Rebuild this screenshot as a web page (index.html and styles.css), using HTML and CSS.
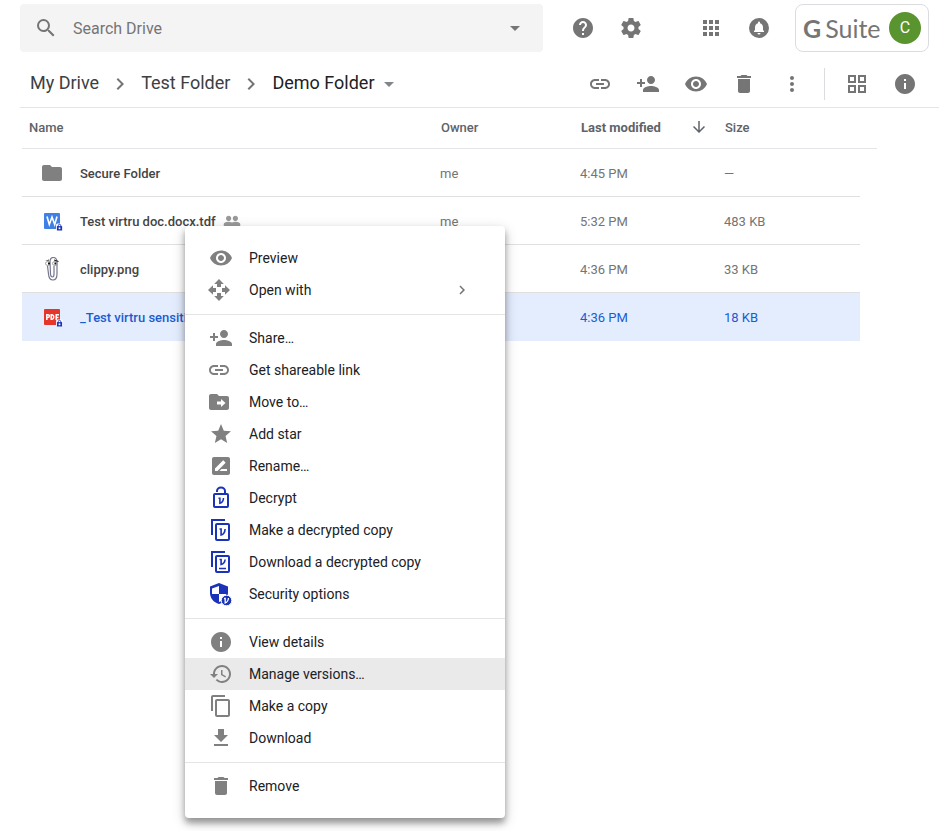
FILE: index.html
```
<!DOCTYPE html>
<html lang="en">
  <head>
    <meta charset="UTF-8" />
    <meta name="viewport" content="width=device-width, initial-scale=1.0" />
    <title>Demo Folder - Drive</title>
    <link rel="stylesheet" href="styles.css">
  </head>
  <body>
    <!-- icons used more than once -->
    <svg class="sprite" aria-hidden="true">
      <symbol id="eye" viewBox="0 0 24 24"><path d="M12 4.500C7 4.500 2.730 7.610 1 12c1.730 4.390 6 7.500 11 7.500s9.270-3.110 11-7.500c-1.730-4.390-6-7.500-11-7.500zM12 17c-2.760 0-5-2.240-5-5s2.240-5 5-5 5 2.240 5 5-2.240 5-5 5zm0-8c-1.660 0-3 1.340-3 3s1.340 3 3 3 3-1.340 3-3-1.340-3-3-3z"/></symbol>
      <symbol id="person-add" viewBox="0 0 24 24"><path d="M15 12c2.210 0 4-1.790 4-4s-1.790-4-4-4-4 1.790-4 4 1.790 4 4 4zm-9-2V7H4v3H1v2h3v3h2v-3h3v-2H6zm9 4c-2.670 0-8 1.340-8 4v2h16v-2c0-2.660-5.330-4-8-4z"/></symbol>
      <symbol id="link" viewBox="0 0 24 24"><path d="M3.900 12c0-1.710 1.390-3.100 3.100-3.100h4V7H7c-2.760 0-5 2.240-5 5s2.240 5 5 5h4v-1.900H7c-1.710 0-3.100-1.390-3.100-3.100zM8 13h8v-2H8v2zm9-6h-4v1.900h4c1.710 0 3.100 1.390 3.100 3.100s-1.390 3.100-3.100 3.100h-4V17h4c2.760 0 5-2.240 5-5s-2.240-5-5-5z"/></symbol>
      <symbol id="trash" viewBox="0 0 24 24"><path d="M6 19c0 1.100.9 2 2 2h8c1.100 0 2-.9 2-2V7H6v12zM19 4h-3.500l-1-1h-5l-1 1H5v2h14V4z"/></symbol>
      <symbol id="info" viewBox="0 0 24 24"><path d="M12 2C6.480 2 2 6.480 2 12s4.480 10 10 10 10-4.480 10-10S17.520 2 12 2zm1 15h-2v-6h2v6zm0-8h-2V7h2v2z"/></symbol>
      <symbol id="chevron" viewBox="0 0 24 24"><path d="M10 6L8.590 7.410 13.170 12l-4.580 4.590L10 18l6-6z"/></symbol>
      <symbol id="drop" viewBox="0 0 24 24"><path d="M7 10l5 5 5-5z"/></symbol>
      <symbol id="lock-badge" viewBox="0 0 8 8"><rect width="8" height="8" rx="2" fill="#fff"/><path fill="none" stroke="#1a33b8" d="M2.500 4V2.500a1.500 1.500 0 0 1 3 0V4"/><path fill="#1a33b8" d="M1 3h6v5H1z"/><path fill="#fff" d="M3 4.500h2v2H3z"/></symbol>
    </svg>

    <header class="topbar">
      <form class="search">
        <svg class="icon" viewBox="0 0 24 24"><path d="M15.500 14h-.79l-.28-.27A6.471 6.471 0 0 0 16 9.500 6.500 6.500 0 1 0 9.500 16c1.610 0 3.090-.59 4.230-1.570l.27.28v.79l5 4.990L20.490 19l-4.990-5zm-6 0C7.010 14 5 11.990 5 9.500S7.010 5 9.500 5 14 7.010 14 9.500 11.990 14 9.500 14z"/></svg>
        <input type="text" placeholder="Search Drive" aria-label="Search Drive">
        <button type="button" class="icon-btn" aria-label="Search options"><svg class="icon"><use href="#drop"/></svg></button>
      </form>
      <div class="top-actions">
        <button class="icon-btn" aria-label="Help"><svg class="icon" viewBox="0 0 24 24"><path d="M12 2C6.480 2 2 6.480 2 12s4.480 10 10 10 10-4.480 10-10S17.520 2 12 2zm1 17h-2v-2h2v2zm2.070-7.750l-.9.920C13.450 12.900 13 13.500 13 15h-2v-.5c0-1.100.45-2.100 1.170-2.830l1.240-1.260c.37-.36.59-.86.59-1.410 0-1.100-.9-2-2-2s-2 .9-2 2H8c0-2.210 1.790-4 4-4s4 1.790 4 4c0 .88-.36 1.680-.93 2.250z"/></svg></button>
        <button class="icon-btn" aria-label="Settings"><svg class="icon" viewBox="0 0 24 24"><path d="M19.430 12.980c.04-.32.07-.64.07-.98s-.03-.66-.07-.98l2.110-1.650c.19-.15.24-.42.12-.64l-2-3.460c-.12-.22-.39-.3-.61-.22l-2.490 1c-.52-.4-1.080-.73-1.690-.98l-.38-2.650C14.460 2.180 14.250 2 14 2h-4c-.25 0-.46.18-.49.42l-.38 2.650c-.61.25-1.170.59-1.690.98l-2.490-1c-.23-.09-.49 0-.61.22l-2 3.460c-.13.22-.07.49.12.64l2.110 1.650c-.04.32-.07.65-.07.98s.03.66.07.98l-2.110 1.650c-.19.15-.24.42-.12.64l2 3.460c.12.22.39.3.61.22l2.490-1c.52.4 1.080.73 1.690.98l.38 2.650c.03.24.24.42.49.42h4c.25 0 .46-.18.49-.42l.38-2.650c.61-.25 1.170-.59 1.690-.98l2.490 1c.23.09.49 0 .61-.22l2-3.460c.12-.22.07-.49-.12-.64l-2.110-1.650zM12 15.500c-1.930 0-3.500-1.570-3.500-3.500s1.570-3.500 3.500-3.500 3.500 1.570 3.500 3.500-1.570 3.500-3.500 3.500z"/></svg></button>
        <button class="icon-btn apps" aria-label="Apps"><svg class="icon" viewBox="0 0 24 24"><path d="M4 8h4V4H4v4zm6 12h4v-4h-4v4zm-6 0h4v-4H4v4zm0-6h4v-4H4v4zm6 0h4v-4h-4v4zm6-10v4h4V4h-4zm-6 4h4V4h-4v4zm6 6h4v-4h-4v4zm0 6h4v-4h-4v4z"/></svg></button>
        <button class="icon-btn" aria-label="Notifications"><svg class="icon" viewBox="0 0 24 24"><path d="M12 2a10 10 0 1 0 0 20 10 10 0 0 0 0-20zm0 16.500a1.500 1.500 0 0 1-1.500-1.500h3a1.500 1.500 0 0 1-1.500 1.500zm5-2.500H7v-1l1-1v-2.600c0-2.100 1.100-3.800 3-4.200v-.7a1 1 0 0 1 2 0v.7c1.900.4 3 2.100 3 4.200V14l1 1v1z"/></svg></button>
        <a class="account" href="#">
          <span class="suite"><b>G</b><span>Suite</span></span>
          <span class="avatar">C</span>
        </a>
      </div>
    </header>

    <div class="toolbar">
      <nav class="crumbs">
        <a href="#">My Drive</a>
        <svg class="icon"><use href="#chevron"/></svg>
        <a href="#">Test Folder</a>
        <svg class="icon"><use href="#chevron"/></svg>
        <a href="#" class="current">Demo Folder</a>
        <svg class="icon arrow"><use href="#drop"/></svg>
      </nav>
      <div class="tools">
        <button class="icon-btn" aria-label="Get link"><svg class="icon"><use href="#link"/></svg></button>
        <button class="icon-btn" aria-label="Share"><svg class="icon"><use href="#person-add"/></svg></button>
        <button class="icon-btn" aria-label="Preview"><svg class="icon"><use href="#eye"/></svg></button>
        <button class="icon-btn" aria-label="Remove"><svg class="icon"><use href="#trash"/></svg></button>
        <button class="icon-btn" aria-label="More actions"><svg class="icon" viewBox="0 0 24 24"><path d="M12 8c1.100 0 2-.9 2-2s-.9-2-2-2-2 .9-2 2 .9 2 2 2zm0 2c-1.100 0-2 .9-2 2s.9 2 2 2 2-.9 2-2-.9-2-2-2zm0 6c-1.100 0-2 .9-2 2s.9 2 2 2 2-.9 2-2-.9-2-2-2z"/></svg></button>
      </div>
      <div class="view-tools">
        <button class="icon-btn" aria-label="Grid view"><svg class="icon" viewBox="0 0 24 24"><path fill-rule="evenodd" d="M3 3h8v8H3zm2 2v4h4V5zm8-2h8v8h-8zm2 2v4h4V5zM3 13h8v8H3zm2 2v4h4v-4zm8-2h8v8h-8zm2 2v4h4v-4z"/></svg></button>
        <button class="icon-btn" aria-label="View details"><svg class="icon"><use href="#info"/></svg></button>
      </div>
    </div>

    <main>
      <table class="files">
        <thead>
          <tr>
            <th class="name">Name</th>
            <th class="owner">Owner</th>
            <th class="modified"><div class="sort">Last modified <svg viewBox="0 0 24 24"><path d="M20 12l-1.410-1.410L13 16.170V4h-2v12.170l-5.580-5.590L4 12l8 8 8-8z"/></svg></div></th>
            <th class="size">Size</th>
            <th class="gutter"></th>
          </tr>
        </thead>
        <tbody>
          <tr>
            <td>
              <div class="file">
                <svg class="icon" viewBox="0 0 24 24"><path d="M10 4H4c-1.100 0-1.990.9-1.990 2L2 18c0 1.100.9 2 2 2h16c1.100 0 2-.9 2-2V8c0-1.100-.9-2-2-2h-8l-2-2z"/></svg>
                <span>Secure Folder</span>
              </div>
            </td>
            <td>me</td>
            <td>4:45 PM</td>
            <td>—</td>
          </tr>
          <tr>
            <td>
              <div class="file">
                <svg class="icon" viewBox="0 0 24 24"><rect x="4" y="4" width="16" height="16" rx="1" fill="#4080e4"/><path fill="none" stroke="#fff" stroke-width="1.600" d="M7 7.500l2.300 8L12 8l2.700 7.500L17 7.500"/><use href="#lock-badge" x="16" y="14" width="7" height="8"/></svg>
                <span>Test virtru doc.docx.tdf</span>
                <svg class="shared" viewBox="0 0 24 24"><path d="M16.500 13c-1.200 0-3.070.34-4.500 1-1.430-.67-3.300-1-4.500-1C5.330 13 1 14.080 1 16.250V19h22v-2.750c0-2.170-4.330-3.250-6.500-3.250zM7.500 12C9.430 12 11 10.430 11 8.500S9.430 5 7.500 5 4 6.570 4 8.500 5.570 12 7.500 12zm9 0c1.930 0 3.500-1.570 3.500-3.500S18.430 5 16.500 5 13 6.570 13 8.500s1.570 3.500 3.500 3.500z"/></svg>
              </div>
            </td>
            <td>me</td>
            <td>5:32 PM</td>
            <td>483 KB</td>
          </tr>
          <tr>
            <td>
              <div class="file">
                <svg class="icon" viewBox="0 0 24 24"><g fill="none" stroke="#74768c" stroke-width="1.200"><path d="M7.500 9l1 8c.5 8 8.500 8 8.500 0V5c0-6-7-6-7 0l.5 12c.3 4 3.500 4 3.500 0V9"/></g><ellipse cx="8" cy="6.500" rx="2.500" ry="2" fill="#fff" stroke="#8a8a8a" stroke-width=".8"/><ellipse cx="15" cy="6.500" rx="2.500" ry="2" fill="#fff" stroke="#8a8a8a" stroke-width=".8"/><path fill="#111" d="M8 5.500h2v2H8zm6.500 0h2v2h-2zM5 4l4-1.500v1zm9-1.500L18.500 4v1L14 3.500z"/></svg>
                <span>clippy.png</span>
              </div>
            </td>
            <td>me</td>
            <td>4:36 PM</td>
            <td>33 KB</td>
          </tr>
          <tr class="selected">
            <td>
              <div class="file">
                <svg class="icon" viewBox="0 0 24 24"><rect x="4" y="4" width="16" height="16" rx="1" fill="#e6352b"/><g fill="none" stroke="#fff" stroke-width="1.500"><path d="M6.800 15V9.700h1.200a1.300 1.300 0 0 1 0 2.800H6.800M11.200 9.700v4.600h.5a1.900 1.900 0 0 0 1.900-2.300 1.900 1.900 0 0 0-1.900-2.300zM16.200 15V9.700h2.800M16.200 12.400h2.300"/></g><use href="#lock-badge" x="16" y="14" width="7" height="8"/></svg>
                <span>_Test virtru sensitive.pdf.tdf</span>
              </div>
            </td>
            <td>me</td>
            <td>4:36 PM</td>
            <td>18 KB</td>
          </tr>
        </tbody>
      </table>
    </main>

    <div class="menu" role="menu">
      <button role="menuitem"><svg class="icon"><use href="#eye"/></svg>Preview</button>
      <button role="menuitem"><svg class="icon wide" viewBox="0 0 24 24"><path d="M12 1l4.800 5H14v3h-4V6H7.200zM12 23l-4.800-5H10v-3h4v3h2.800zM1 12l5-4.800V10h3v4H6v2.800zM23 12l-5 4.800V14h-3v-4h3V7.200z"/></svg>Open with<svg class="more"><use href="#chevron"/></svg></button>
      <hr>
      <button role="menuitem"><svg class="icon"><use href="#person-add"/></svg>Share…</button>
      <button role="menuitem"><svg class="icon wide"><use href="#link"/></svg>Get shareable link</button>
      <button role="menuitem"><svg class="icon wide" viewBox="0 0 24 24"><path d="M20 6h-8l-2-2H4c-1.100 0-2 .9-2 2v12c0 1.100.9 2 2 2h16c1.100 0 2-.9 2-2V8c0-1.100-.9-2-2-2zm-6 11v-2.500h-4v-3h4V9l4.500 4-4.500 4z"/></svg>Move to…</button>
      <button role="menuitem"><svg class="icon" viewBox="0 0 24 24"><path d="M12 17.270L18.180 21l-1.640-7.030L22 9.240l-7.190-.61L12 2 9.190 8.630 2 9.240l5.460 4.730L5.820 21z"/></svg>Add star</button>
      <button role="menuitem"><svg class="icon" viewBox="0 0 24 24"><path d="M19 3H5c-1.100 0-2 .9-2 2v14c0 1.100.9 2 2 2h14c1.100 0 2-.9 2-2V5c0-1.100-.9-2-2-2zM6 17v-2.500l7.900-7.900c.2-.2.500-.2.700 0l1.800 1.800c.2.200.2.500 0 .7L8.500 17H6zm12 0h-7.500l2-2H18v2z"/></svg>Rename…</button>
      <button role="menuitem"><svg class="icon virtru" viewBox="0 0 24 24"><path d="M8 6V5a4 3.500 0 0 1 8 0v3"/><rect x="5" y="8" width="14" height="13" rx="1"/><path class="v" d="M9.500 12.200h1.400v5c2-.5 3.500-2.500 3.600-5.200"/></svg>Decrypt</button>
      <button role="menuitem"><svg class="icon virtru" viewBox="0 0 24 24"><path d="M3 17V2h13"/><rect x="7" y="6" width="13" height="16" rx="1"/><path class="v" d="M10.500 11h1.600v6c2-.5 3.800-2.500 4-6"/></svg>Make a decrypted copy</button>
      <button role="menuitem"><svg class="icon virtru" viewBox="0 0 24 24"><path d="M3 17V2h13"/><rect x="7" y="6" width="13" height="16" rx="1"/><path class="v" d="M10.500 9.500h1.600v5c2-.5 3.800-2.500 4-5M10 18.500h7"/></svg>Download a decrypted copy</button>
      <button role="menuitem"><svg class="icon" viewBox="0 0 24 24"><path fill="#1a33b8" d="M10 1L1 4.500v6.500c0 5 3.500 9.500 9 11 5.500-1.500 9-6 9-11V4.500z"/><path fill="#fff" d="M10 4v8H3V6.500zM10 12h7c-.3 4-3 6.800-7 8z"/><circle cx="17.500" cy="18.500" r="5.300" fill="#1a33b8" stroke="#fff"/><path fill="none" stroke="#fff" stroke-width="1.300" d="M15 16.500h1.200v4.500c1.800-.6 3-2.500 3.300-5"/></svg>Security options</button>
      <hr>
      <button role="menuitem"><svg class="icon"><use href="#info"/></svg>View details</button>
      <button role="menuitem" class="hover"><svg class="icon" viewBox="0 0 24 24"><path d="M13 3c-4.970 0-9 4.030-9 9H1l4 4 4-4H6c0-3.870 3.130-7 7-7s7 3.130 7 7-3.130 7-7 7c-1.930 0-3.680-.79-4.940-2.060l-1.420 1.420A8.950 8.950 0 0 0 13 21c4.970 0 9-4.030 9-9s-4.030-9-9-9zm-1 5v5l4.280 2.540.72-1.210-3.500-2.080V8H12z"/></svg>Manage versions…</button>
      <button role="menuitem"><svg class="icon" viewBox="0 0 24 24"><path d="M16 1H4c-1.100 0-2 .9-2 2v14h2V3h12V1zm3 4H8c-1.100 0-2 .9-2 2v14c0 1.100.9 2 2 2h11c1.100 0 2-.9 2-2V7c0-1.100-.9-2-2-2zm0 16H8V7h11v14z"/></svg>Make a copy</button>
      <button role="menuitem"><svg class="icon" viewBox="0 0 24 24"><path d="M19 9h-4V3H9v6H5l7 7 7-7zM5 18v2h14v-2H5z"/></svg>Download</button>
      <hr>
      <button role="menuitem"><svg class="icon"><use href="#trash"/></svg>Remove</button>
    </div>
  </body>
</html>
```
FILE: styles.css
```
* {
  box-sizing: border-box;
}
body {
  margin: 0;
  background: #fff;
  color: #202124;
  font-family: Roboto, "Liberation Sans", sans-serif;
  font-size: 14px;
}
a {
  color: inherit;
  text-decoration: none;
}
button {
  border: 0;
  padding: 0;
  background: none;
  font: inherit;
  color: inherit;
}
.sprite {
  display: none;
}
.icon {
  display: block;
  flex: none;
  width: 24px;
  height: 24px;
  fill: #757575;
}
.icon-btn {
  display: flex;
  align-items: center;
  justify-content: center;
  width: 48px;
  height: 48px;
}

/* top bar */
.topbar {
  display: flex;
  padding: 4px 10px 4px 20px;
}
.search {
  display: flex;
  flex: 1;
  align-items: center;
  height: 48px;
  padding-left: 14px;
  padding-right: 4px;
  border-radius: 4px;
  background: #f4f4f4;
}
.search input {
  flex: 1;
  min-width: 0;
  margin-left: 13px;
  border: 0;
  outline: 0;
  background: none;
  font: 16px Roboto, "Liberation Sans", sans-serif;
}
.search input::placeholder {
  color: #757575;
}
.top-actions {
  display: flex;
  padding-left: 16px;
}
.apps {
  margin-left: 32px;
}
.account {
  display: flex;
  align-items: center;
  justify-content: space-between;
  width: 134px;
  margin-left: 12px;
  padding: 0 7px;
  border: 1px solid #dadce0;
  border-radius: 8px;
}
.suite {
  display: flex;
  gap: 4px;
  color: #757575;
  font: 25px Lato, sans-serif;
}
.avatar {
  width: 32px;
  height: 32px;
  border-radius: 50%;
  background: #5a942e;
  color: #fff;
  font-size: 16px;
  line-height: 32px;
  text-align: center;
}

/* breadcrumbs and tools */
.toolbar {
  display: flex;
  align-items: center;
  height: 52px;
  margin-left: 20px;
  padding: 4px 10px 0;
  border-bottom: 1px solid #e4e5e8;
}
.crumbs {
  display: flex;
  flex: 1;
  align-items: center;
  gap: 9px;
  color: #3c4043;
  font-size: 18px;
  line-height: 24px;
  white-space: nowrap;
}
.crumbs a {
  padding-bottom: 2px;
}
.crumbs .current {
  color: #202124;
}
.crumbs .arrow {
  margin-left: -6px;
  fill: #80868b;
}
.tools,
.view-tools {
  display: flex;
}
.view-tools {
  align-items: center;
  height: 32px;
  margin-left: 8px;
  padding-left: 8px;
  border-left: 1px solid #dadce0;
}

/* file list */
.files {
  width: calc(100% - 84px);
  margin-left: 22px;
  border-spacing: 0;
  table-layout: fixed;
  font-size: 13px;
}
.files th {
  height: 41px;
  padding: 0 1px 2px;
  border-bottom: 1px solid #e4e5e8;
  color: #5f6368;
  font-weight: 500;
  text-align: left;
}
.files .name {
  padding-left: 7px;
}
.owner {
  width: 140px;
}
.modified {
  width: 144px;
}
.size {
  width: 136px;
}
.gutter {
  width: 17px;
}
.sort {
  display: flex;
  align-items: center;
  justify-content: space-between;
  padding-right: 15px;
  font-weight: 700;
}
.sort svg {
  width: 18px;
  height: 18px;
  fill: #5f6368;
}
.files td {
  height: 48px;
  padding: 0;
  border-bottom: 1px solid #e0e0e0;
  color: #757575;
}
.files td + td,
.file span {
  padding-top: 2px;
}
.file {
  display: flex;
  align-items: center;
  padding-left: 18px;
  color: #444;
  font-weight: 500;
}
.file .icon {
  fill: #808080;
}
.file span {
  margin-left: 16px;
}
.shared {
  width: 18px;
  height: 18px;
  margin-left: 7px;
  fill: #9a9a9a;
}
.files .selected td {
  border-color: #e4edfe;
  background: #e4edfe;
  color: #1a5cd0;
}
.selected .file {
  color: #1a5cd0;
}

/* context menu, lies over the list */
.menu {
  position: absolute;
  top: 226px;
  left: 185px;
  width: 320px;
  padding: 16px 0;
  border-radius: 4px;
  background: #fff;
  box-shadow: 0 5px 6px rgba(0, 0, 0, 0.32), 0 4px 14px rgba(0, 0, 0, 0.2);
}
.menu button {
  display: flex;
  align-items: center;
  width: 100%;
  height: 32px;
  padding: 0 34px 0 24px;
  text-align: left;
}
.menu .icon {
  margin-right: 16px;
  fill: #808080;
}
.menu .wide {
  margin-left: -2px;
  margin-right: 18px;
}
.menu .more {
  width: 18px;
  height: 18px;
  margin-left: auto;
  fill: #757575;
}
.menu .hover {
  background: #eaeaea;
}
.menu .virtru {
  fill: none;
  stroke: #1a33b8;
  stroke-width: 2;
}
.menu .virtru .v {
  stroke-width: 1.6;
}
.menu hr {
  height: 1px;
  margin: 8px 0 7px;
  border: 0;
  background: #e4e4e4;
}
```
